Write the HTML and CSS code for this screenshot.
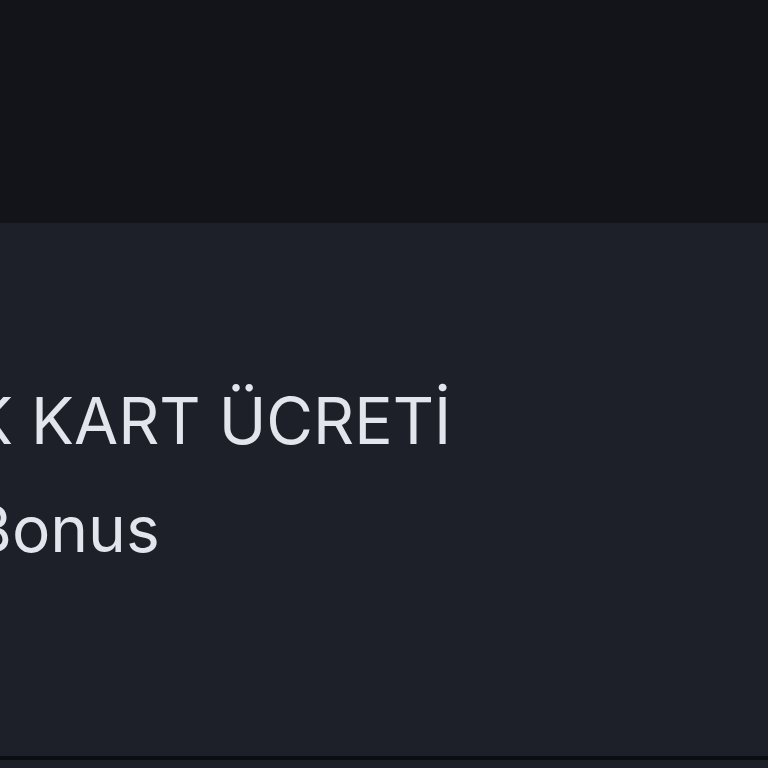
FILE: index.html
```html
<!DOCTYPE html>
<html lang="tr">
<head>
<meta charset="utf-8">
<link rel="stylesheet" href="styles.css">
</head>
<body>
<header class="topbar"></header>
<section class="panel">
  <div class="offer">
    <p class="offer-title">K KART ÜCRETİ</p>
    <p class="offer-sub">Bonus</p>
  </div>
</section>
<div class="divider"></div>
<section class="panel-next"></section>
</body>
</html>
```
FILE: styles.css
```css
html, body {
  margin: 0;
  padding: 0;
  height: 100%;
  overflow: hidden;
  background: #1d2029;
  font-family: Inter, "Noto Sans", sans-serif;
}
.topbar {
  height: 223px;
  background: #131419;
}
.panel {
  height: 533px;
  background: #1d2029;
  overflow: hidden;
}
.offer {
  margin-left: -30px;
  padding-top: 158px;
  color: #e3e5ec;
}
.offer-title {
  margin: 0;
  font-size: 64px;
  line-height: 80px;
  font-weight: 400;
  white-space: nowrap;
}
.offer-sub {
  margin: 28px 0 0;
  font-size: 64px;
  line-height: 80px;
  font-weight: 400;
}
.divider {
  height: 4px;
  background: #0b0d13;
}
.panel-next {
  height: 20px;
  background: #1d2029;
}
```
